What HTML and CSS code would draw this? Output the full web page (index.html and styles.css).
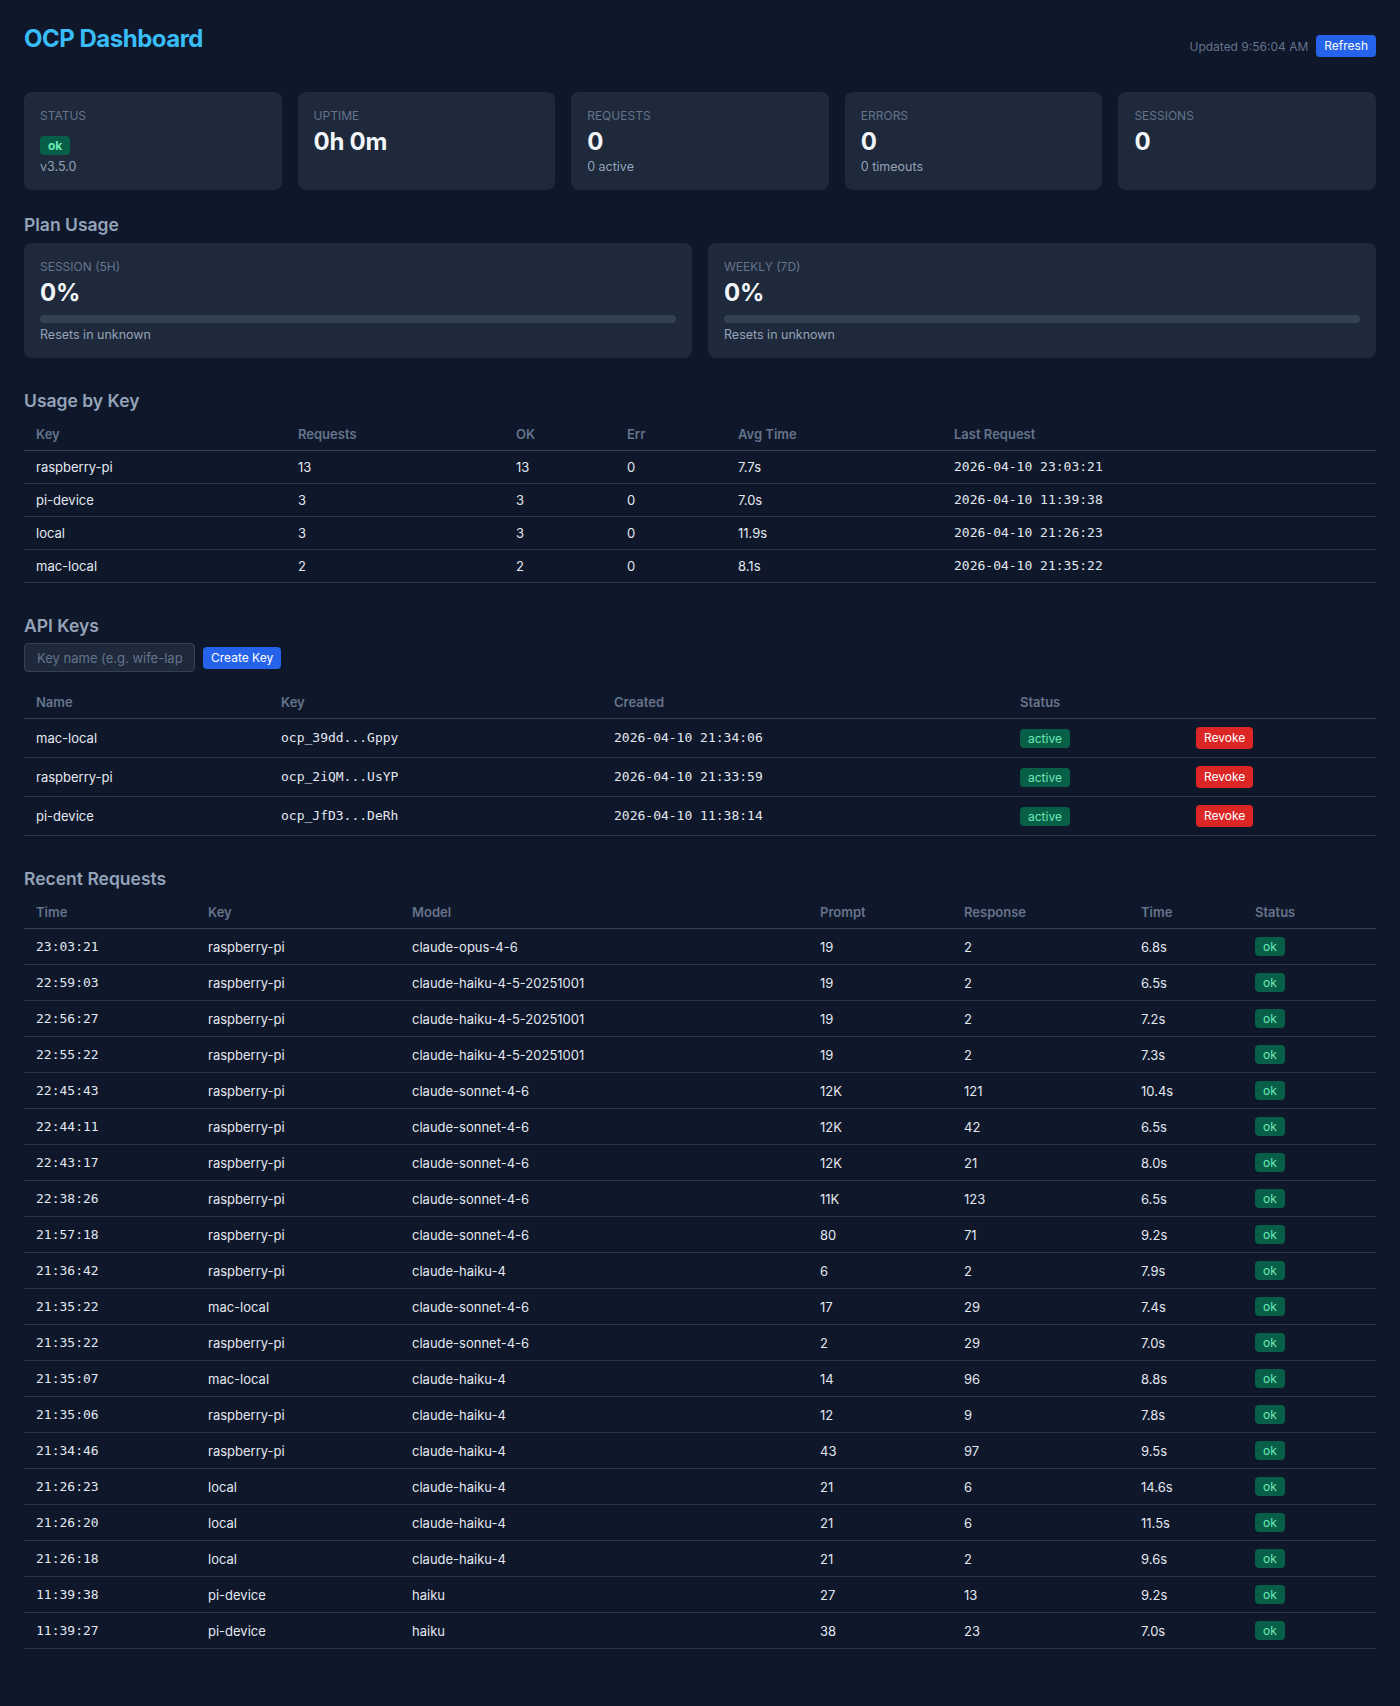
FILE: index.html
```html
<!DOCTYPE html>
<html lang="en">
<head>
  <meta charset="UTF-8">
  <meta name="viewport" content="width=device-width, initial-scale=1">
  <title>OCP Dashboard</title>
  <link rel="stylesheet" href="styles.css">
</head>
<body>
  <header class="topbar">
    <h1>OCP Dashboard</h1>
    <div class="topbar-right">
      <span class="updated">Updated 9:56:04 AM</span>
      <button class="btn">Refresh</button>
    </div>
  </header>

  <div class="stats">
    <div class="card">
      <div class="label">Status</div>
      <div class="value"><span class="badge badge-strong">ok</span></div>
      <div class="sub">v3.5.0</div>
    </div>
    <div class="card">
      <div class="label">Uptime</div>
      <div class="value">0h 0m</div>
    </div>
    <div class="card">
      <div class="label">Requests</div>
      <div class="value">0</div>
      <div class="sub">0 active</div>
    </div>
    <div class="card">
      <div class="label">Errors</div>
      <div class="value">0</div>
      <div class="sub">0 timeouts</div>
    </div>
    <div class="card">
      <div class="label">Sessions</div>
      <div class="value">0</div>
    </div>
  </div>

  <section class="section plan-section">
    <h2>Plan Usage</h2>
    <div class="plans">
      <div class="card">
        <div class="label">Session (5h)</div>
        <div class="value">0%</div>
        <div class="bar"><div class="bar-fill" style="width: 0%"></div></div>
        <div class="sub">Resets in unknown</div>
      </div>
      <div class="card">
        <div class="label">Weekly (7d)</div>
        <div class="value">0%</div>
        <div class="bar"><div class="bar-fill" style="width: 0%"></div></div>
        <div class="sub">Resets in unknown</div>
      </div>
    </div>
  </section>

  <section class="section">
    <h2>Usage by Key</h2>
    <table class="usage-table">
      <thead>
        <tr><th>Key</th><th>Requests</th><th>OK</th><th>Err</th><th>Avg Time</th><th>Last Request</th></tr>
      </thead>
      <tbody>
        <tr><td>raspberry-pi</td><td>13</td><td>13</td><td>0</td><td>7.7s</td><td class="mono">2026-04-10 23:03:21</td></tr>
        <tr><td>pi-device</td><td>3</td><td>3</td><td>0</td><td>7.0s</td><td class="mono">2026-04-10 11:39:38</td></tr>
        <tr><td>local</td><td>3</td><td>3</td><td>0</td><td>11.9s</td><td class="mono">2026-04-10 21:26:23</td></tr>
        <tr><td>mac-local</td><td>2</td><td>2</td><td>0</td><td>8.1s</td><td class="mono">2026-04-10 21:35:22</td></tr>
      </tbody>
    </table>
  </section>

  <section class="section">
    <h2>API Keys</h2>
    <div class="key-form">
      <input type="text" id="keyName" placeholder="Key name (e.g. wife-laptop)">
      <button class="btn">Create Key</button>
    </div>
    <table class="keys-table">
      <thead>
        <tr><th>Name</th><th>Key</th><th>Created</th><th>Status</th><th></th></tr>
      </thead>
      <tbody>
        <tr><td>mac-local</td><td class="mono">ocp_39dd...Gppy</td><td class="mono">2026-04-10 21:34:06</td><td><span class="badge">active</span></td><td><button class="btn btn-danger">Revoke</button></td></tr>
        <tr><td>raspberry-pi</td><td class="mono">ocp_2iQM...UsYP</td><td class="mono">2026-04-10 21:33:59</td><td><span class="badge">active</span></td><td><button class="btn btn-danger">Revoke</button></td></tr>
        <tr><td>pi-device</td><td class="mono">ocp_JfD3...DeRh</td><td class="mono">2026-04-10 11:38:14</td><td><span class="badge">active</span></td><td><button class="btn btn-danger">Revoke</button></td></tr>
      </tbody>
    </table>
  </section>

  <section class="section">
    <h2>Recent Requests</h2>
    <table class="recent-table">
      <thead>
        <tr><th>Time</th><th>Key</th><th>Model</th><th>Prompt</th><th>Response</th><th>Time</th><th>Status</th></tr>
      </thead>
      <tbody>
        <tr><td class="mono">23:03:21</td><td>raspberry-pi</td><td>claude-opus-4-6</td><td>19</td><td>2</td><td>6.8s</td><td><span class="badge">ok</span></td></tr>
        <tr><td class="mono">22:59:03</td><td>raspberry-pi</td><td>claude-haiku-4-5-20251001</td><td>19</td><td>2</td><td>6.5s</td><td><span class="badge">ok</span></td></tr>
        <tr><td class="mono">22:56:27</td><td>raspberry-pi</td><td>claude-haiku-4-5-20251001</td><td>19</td><td>2</td><td>7.2s</td><td><span class="badge">ok</span></td></tr>
        <tr><td class="mono">22:55:22</td><td>raspberry-pi</td><td>claude-haiku-4-5-20251001</td><td>19</td><td>2</td><td>7.3s</td><td><span class="badge">ok</span></td></tr>
        <tr><td class="mono">22:45:43</td><td>raspberry-pi</td><td>claude-sonnet-4-6</td><td>12K</td><td>121</td><td>10.4s</td><td><span class="badge">ok</span></td></tr>
        <tr><td class="mono">22:44:11</td><td>raspberry-pi</td><td>claude-sonnet-4-6</td><td>12K</td><td>42</td><td>6.5s</td><td><span class="badge">ok</span></td></tr>
        <tr><td class="mono">22:43:17</td><td>raspberry-pi</td><td>claude-sonnet-4-6</td><td>12K</td><td>21</td><td>8.0s</td><td><span class="badge">ok</span></td></tr>
        <tr><td class="mono">22:38:26</td><td>raspberry-pi</td><td>claude-sonnet-4-6</td><td>11K</td><td>123</td><td>6.5s</td><td><span class="badge">ok</span></td></tr>
        <tr><td class="mono">21:57:18</td><td>raspberry-pi</td><td>claude-sonnet-4-6</td><td>80</td><td>71</td><td>9.2s</td><td><span class="badge">ok</span></td></tr>
        <tr><td class="mono">21:36:42</td><td>raspberry-pi</td><td>claude-haiku-4</td><td>6</td><td>2</td><td>7.9s</td><td><span class="badge">ok</span></td></tr>
        <tr><td class="mono">21:35:22</td><td>mac-local</td><td>claude-sonnet-4-6</td><td>17</td><td>29</td><td>7.4s</td><td><span class="badge">ok</span></td></tr>
        <tr><td class="mono">21:35:22</td><td>raspberry-pi</td><td>claude-sonnet-4-6</td><td>2</td><td>29</td><td>7.0s</td><td><span class="badge">ok</span></td></tr>
        <tr><td class="mono">21:35:07</td><td>mac-local</td><td>claude-haiku-4</td><td>14</td><td>96</td><td>8.8s</td><td><span class="badge">ok</span></td></tr>
        <tr><td class="mono">21:35:06</td><td>raspberry-pi</td><td>claude-haiku-4</td><td>12</td><td>9</td><td>7.8s</td><td><span class="badge">ok</span></td></tr>
        <tr><td class="mono">21:34:46</td><td>raspberry-pi</td><td>claude-haiku-4</td><td>43</td><td>97</td><td>9.5s</td><td><span class="badge">ok</span></td></tr>
        <tr><td class="mono">21:26:23</td><td>local</td><td>claude-haiku-4</td><td>21</td><td>6</td><td>14.6s</td><td><span class="badge">ok</span></td></tr>
        <tr><td class="mono">21:26:20</td><td>local</td><td>claude-haiku-4</td><td>21</td><td>6</td><td>11.5s</td><td><span class="badge">ok</span></td></tr>
        <tr><td class="mono">21:26:18</td><td>local</td><td>claude-haiku-4</td><td>21</td><td>2</td><td>9.6s</td><td><span class="badge">ok</span></td></tr>
        <tr><td class="mono">11:39:38</td><td>pi-device</td><td>haiku</td><td>27</td><td>13</td><td>9.2s</td><td><span class="badge">ok</span></td></tr>
        <tr><td class="mono">11:39:27</td><td>pi-device</td><td>haiku</td><td>38</td><td>23</td><td>7.0s</td><td><span class="badge">ok</span></td></tr>
      </tbody>
    </table>
  </section>
</body>
</html>
```

FILE: styles.css
```css
body {
  margin: 0;
  padding: 24px;
  background: #0f172a;
  color: #e2e8f0;
  font-family: Inter, "Noto Sans", sans-serif;
  font-size: 13px;
}
.topbar {
  display: flex;
  justify-content: space-between;
  align-items: center;
  margin-bottom: 24px;
}
h1 {
  margin: 0 0 15px;
  font-size: 24px;
  font-weight: 700;
  letter-spacing: -0.5px;
  color: #38bdf8;
}
.topbar-right {
  display: flex;
  align-items: center;
  gap: 8px;
}
.updated {
  font-size: 12px;
  color: #64748b;
}
.btn {
  font-family: inherit;
  font-size: 12px;
  line-height: 14px;
  padding: 4px 8px;
  border: none;
  border-radius: 4px;
  background: #2563eb;
  color: white;
  cursor: pointer;
}
.btn-danger {
  background: #dc2626;
}
.stats {
  display: grid;
  grid-template-columns: repeat(5, 1fr);
  gap: 16px;
  margin-bottom: 24px;
}
.card {
  background: #1e293b;
  border-radius: 8px;
  padding: 16px;
}
.label {
  font-size: 12px;
  color: #64748b;
  text-transform: uppercase;
  margin-bottom: 4px;
}
.value {
  font-size: 24px;
  font-weight: 700;
  letter-spacing: -0.3px;
  color: #f1f5f9;
}
.sub {
  font-size: 12.5px;
  color: #94a3b8;
  margin-top: 3px;
}
.badge {
  display: inline-block;
  padding: 2px 8px;
  border-radius: 4px;
  font-size: 12px;
  line-height: 15px;
  font-weight: 400;
  letter-spacing: 0;
  background: #065f46;
  color: #6ee7b7;
}
.badge-strong {
  font-weight: 700;
}
.section {
  margin-bottom: 32px;
}
h2 {
  margin: 0 0 7px;
  font-size: 17.5px;
  font-weight: 600;
  color: #94a3b8;
}
.plan-section h2 {
  margin-bottom: 8px;
}
.plans {
  display: grid;
  grid-template-columns: 1fr 1fr;
  gap: 16px;
}
.bar {
  height: 8px;
  margin-top: 8px;
  background: #334155;
  border-radius: 4px;
  overflow: hidden;
}
.bar-fill {
  height: 100%;
  background: #38bdf8;
}
.plans .sub {
  margin-top: 4px;
}
table {
  width: 100%;
  border-collapse: collapse;
  table-layout: fixed;
}
th {
  box-sizing: border-box;
  text-align: left;
  font-weight: 600;
  line-height: 16px;
  color: #64748b;
  padding: 8px 12px;
  border-bottom: 1px solid #334155;
}
td {
  padding: 8px 12px;
  line-height: 16px;
  border-bottom: 1px solid #293548;
  white-space: nowrap;
}
.mono {
  font-family: "DejaVu Sans Mono", "Liberation Mono", monospace;
  font-size: 13px;
}
.key-form {
  display: flex;
  align-items: center;
  gap: 8px;
  margin-bottom: 14px;
}
.key-form input {
  width: 171px;
  height: 29px;
  box-sizing: border-box;
  padding: 6px 12px;
  font-family: inherit;
  font-size: 13px;
  color: #e2e8f0;
  background: #1e293b;
  border: 1px solid #334155;
  border-radius: 4px;
}
.key-form input::placeholder {
  color: #64748b;
}
.usage-table th:nth-child(1) { width: 262px; }
.usage-table th:nth-child(2) { width: 218px; }
.usage-table th:nth-child(3) { width: 111px; }
.usage-table th:nth-child(4) { width: 111px; }
.usage-table th:nth-child(5) { width: 216px; }
.keys-table th:nth-child(1) { width: 245px; }
.keys-table th:nth-child(2) { width: 333px; }
.keys-table th:nth-child(3) { width: 406px; }
.keys-table th:nth-child(4) { width: 176px; }
.recent-table th:nth-child(1) { width: 172px; }
.recent-table th:nth-child(2) { width: 204px; }
.recent-table th:nth-child(3) { width: 408px; }
.recent-table th:nth-child(4) { width: 144px; }
.recent-table th:nth-child(5) { width: 177px; }
.recent-table th:nth-child(6) { width: 114px; }
```
